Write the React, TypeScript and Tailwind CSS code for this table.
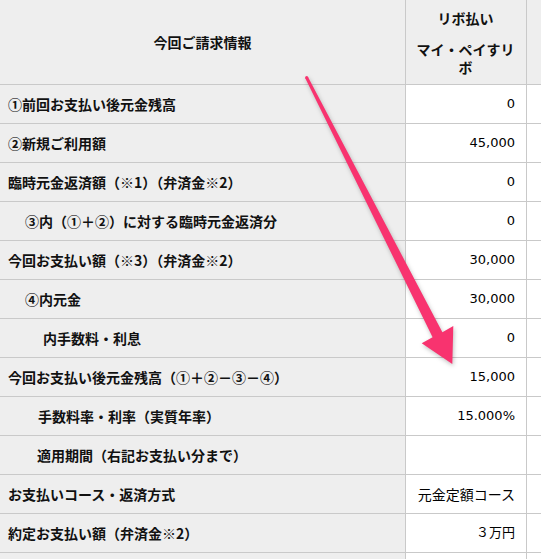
const rows = [
  { label: "①前回お支払い後元金残高", indent: "pl-[8px]", value: "0" },
  { label: "②新規ご利用額", indent: "pl-[8px]", value: "45,000" },
  { label: "臨時元金返済額（※1）（弁済金※2）", indent: "pl-[8px]", value: "0" },
  { label: "③内（①＋②）に対する臨時元金返済分", indent: "pl-[25px]", value: "0" },
  { label: "今回お支払い額（※3）（弁済金※2）", indent: "pl-[8px]", value: "30,000" },
  { label: "④内元金", indent: "pl-[25px]", value: "30,000" },
  { label: "内手数料・利息", indent: "pl-[43px]", value: "0" },
  { label: "今回お支払い後元金残高（①＋②－③－④）", indent: "pl-[8px]", value: "15,000" },
  { label: "手数料率・利率（実質年率）", indent: "pl-[38px]", value: "15.000%" },
  { label: "適用期間（右記お支払い分まで）", indent: "pl-[37px]", value: "" },
  { label: "お支払いコース・返済方式", indent: "pl-[8px]", value: "元金定額コース", jp: true },
  { label: "約定お支払い額（弁済金※2）", indent: "pl-[8px]", value: "３万円" },
  { label: "", indent: "pl-[8px]", value: "" },
];

function Arrow() {
  return (
    <svg
      className="absolute left-0 top-0 pointer-events-none drop-shadow-[1px_2px_2px_rgba(0,0,0,0.25)]"
      width="541"
      height="559"
      viewBox="0 0 541 559"
    >
      <polygon
        fill="#f8336f"
        points="308,77 442.4,332.2 453.3,326 452.3,364 421.7,343.3 432.6,337.2 305.4,78.4"
      />
      <circle cx="306.7" cy="77.7" r="1.6" fill="#f8336f" />
    </svg>
  );
}

export default function App() {
  return (
    <div className="relative w-[541px] h-[559px] overflow-hidden bg-white text-[#111]">
      <div className="grid grid-cols-[406px_121px_1fr]">
        {/* header */}
        <div className="h-[85px] bg-[#eeeeee] border-r border-b border-[#c9c9c9] flex items-center justify-center font-['Noto_Sans_CJK_JP',sans-serif] font-bold text-[14px]">
          今回ご請求情報
        </div>
        <div className="h-[85px] bg-[#eeeeee] border-r border-b border-[#c9c9c9] flex flex-col items-center justify-center pl-[10px] pr-[11px] text-center font-['Noto_Sans_CJK_JP',sans-serif] font-bold text-[14px] leading-[18px]">
          <div className="mb-[13px]">リボ払い</div>
          <div>マイ・ペイすリボ</div>
        </div>
        <div className="h-[85px] bg-[#eeeeee] border-b border-[#c9c9c9]" />

        {rows.map((r, i) => (
          <div key={i} className="contents">
            <div
              className={`h-[39px] bg-[#eeeeee] border-r border-b border-[#c9c9c9] flex items-center ${r.indent} font-['Noto_Sans_CJK_JP',sans-serif] font-bold text-[14px] whitespace-nowrap`}
            >
              {r.label}
            </div>
            <div
              className={`h-[39px] bg-white border-r border-b border-[#c9c9c9] flex items-center justify-end pr-[11px] whitespace-nowrap text-black ${
                r.jp
                  ? "font-['Noto_Sans_CJK_JP',sans-serif] text-[14px]"
                  : "font-['DejaVu_Sans','Noto_Sans_CJK_JP',sans-serif] text-[13px]"
              }`}
            >
              {r.value}
            </div>
            <div className="h-[39px] bg-white border-b border-[#c9c9c9]" />
          </div>
        ))}
      </div>
      <Arrow />
    </div>
  );
}
